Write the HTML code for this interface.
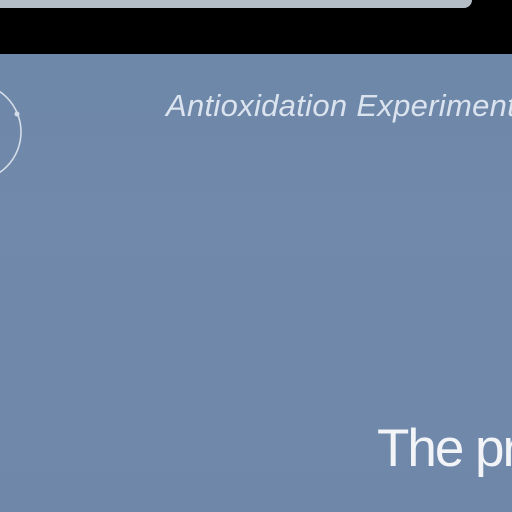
<!DOCTYPE html>
<html><head><style>
html,body{margin:0;padding:0;}
body{width:512px;height:512px;overflow:hidden;position:relative;background:linear-gradient(180deg,#6c87a9 0%,#7189ab 40%,#6f88aa 100%);font-family:"Liberation Sans",sans-serif;}
.top{position:absolute;left:0;top:0;width:512px;height:54px;background:#000;}
.bar{position:absolute;left:0;top:0;width:472px;height:8px;background:#b4bcc6;border-bottom-right-radius:10px;}
.t1{position:absolute;left:166px;top:88px;font-size:31px;font-style:italic;color:#dbe3ee;white-space:nowrap;letter-spacing:0.3px;}
.t2{position:absolute;left:377px;top:418px;font-size:53px;color:#f2f4f8;white-space:nowrap;letter-spacing:-2px;}
</style></head><body>
<div class="top"></div>
<div class="bar"></div>
<svg width="512" height="512" style="position:absolute;left:0;top:0">
<circle cx="-28" cy="132" r="49" fill="none" stroke="#d4dce8" stroke-width="1.6"/>
<circle cx="17" cy="114" r="2.5" fill="#d4dce8"/>
</svg>
<div class="t1">Antioxidation Experiment</div>
<div class="t2">The pr</div>
</body></html>
